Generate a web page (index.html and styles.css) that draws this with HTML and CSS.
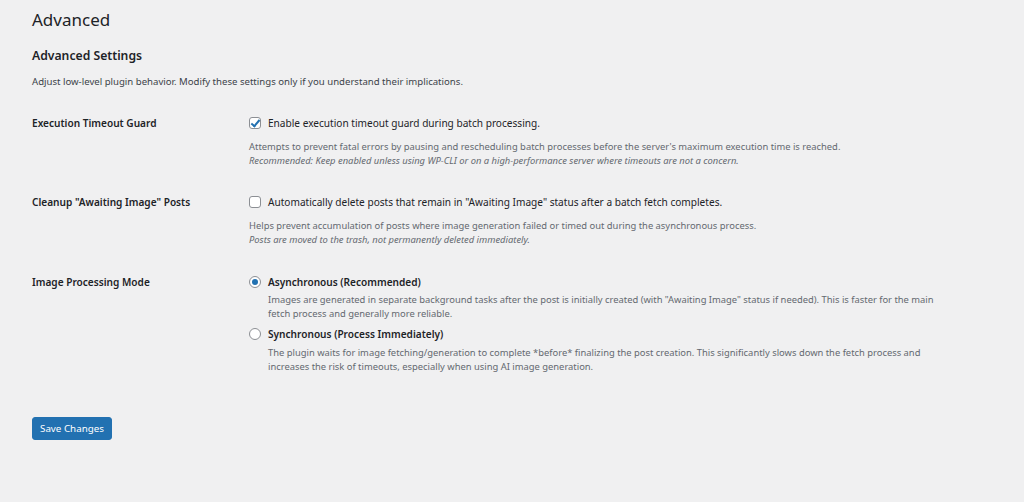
FILE: index.html
```html
<!DOCTYPE html>
<html lang="en">
<head>
  <meta charset="UTF-8">
  <title>Advanced</title>
  <link rel="stylesheet" href="styles.css">
</head>
<body>

  <div class="wrap">
    <h1>Advanced</h1>

    <h2>Advanced Settings</h2>
    <p class="intro">Adjust low-level plugin behavior. Modify these settings only if you understand their implications.</p>

    <form id="advancedForm">
      <!-- Execution timeout guard -->
      <div class="row">
        <div class="row-label">Execution Timeout Guard</div>
        <div class="row-field">
          <label class="check">
            <input type="checkbox" checked>
            <span>Enable execution timeout guard during batch processing.</span>
          </label>
          <p class="description">
            Attempts to prevent fatal errors by pausing and rescheduling batch processes before the server's maximum execution time is reached.<br>
            <em>Recommended: Keep enabled unless using WP-CLI or on a high-performance server where timeouts are not a concern.</em>
          </p>
        </div>
      </div>

      <!-- Cleanup of stuck posts -->
      <div class="row">
        <div class="row-label">Cleanup "Awaiting Image" Posts</div>
        <div class="row-field">
          <label class="check">
            <input type="checkbox">
            <span>Automatically delete posts that remain in "Awaiting Image" status after a batch fetch completes.</span>
          </label>
          <p class="description">
            Helps prevent accumulation of posts where image generation failed or timed out during the asynchronous process.<br>
            <em>Posts are moved to the trash, not permanently deleted immediately.</em>
          </p>
        </div>
      </div>

      <!-- Image processing mode -->
      <div class="row">
        <div class="row-label">Image Processing Mode</div>
        <div class="row-field">
          <label class="check">
            <input type="radio" name="mode" value="async" checked>
            <strong>Asynchronous (Recommended)</strong>
          </label>
          <p class="option-text">Images are generated in separate background tasks after the post is initially created (with "Awaiting Image" status if needed). This is faster for the main fetch process and generally more reliable.</p>

          <label class="check">
            <input type="radio" name="mode" value="sync">
            <strong>Synchronous (Process Immediately)</strong>
          </label>
          <p class="option-text">The plugin waits for image fetching/generation to complete *before* finalizing the post creation. This significantly slows down the fetch process and increases the risk of timeouts, especially when using AI image generation.</p>
        </div>
      </div>

      <p class="submit">
        <button type="button" class="button-primary">Save Changes</button>
      </p>
    </form>
  </div>

</body>
</html>
```

FILE: styles.css
```css
html, body {
  margin: 0;
  background-color: #f0f0f1;
}

body {
  font-family: "Noto Sans", "Open Sans", sans-serif;
  font-size: 10.1px;
  color: #1d2327;
}

.wrap {
  padding: 8px 32px 0 32px;
}

h1 {
  font-size: 17px;
  font-weight: 400;
  line-height: 24px;
  margin: 0;
}

h2 {
  font-size: 12.2px;
  font-weight: 600;
  line-height: 18px;
  margin: 15px 0 0 0;
}

.intro {
  color: #3c434a;
  font-size: 9.6px;
  line-height: 14px;
  margin: 10px 0 0 0;
}

.row {
  display: flex;
  padding: 13px 0;
}

.row:first-child {
  margin-top: 13px;
}

.row:last-of-type {
  padding-top: 14px;
}

.row-label {
  width: 217px;
  flex-shrink: 0;
  font-weight: 600;
  line-height: 16px;
}

.row-field {
  flex: 1;
  padding-right: 38px;
}

.check {
  display: flex;
  align-items: center;
  gap: 7px;
  line-height: 16px;
}

.check strong {
  font-weight: 600;
}

input[type="checkbox"], input[type="radio"] {
  appearance: none;
  -webkit-appearance: none;
  width: 12px;
  height: 12px;
  margin: 0;
  flex-shrink: 0;
  background: #fff;
  border: 1px solid #8c8f94;
  border-radius: 3px;
  position: relative;
}

input[type="radio"] {
  border-radius: 50%;
}

/* blue tick for checked boxes */
input[type="checkbox"]:checked::after {
  content: "";
  position: absolute;
  left: 3px;
  top: 0px;
  width: 3px;
  height: 7px;
  border: solid #2271b1;
  border-width: 0 2px 2px 0;
  transform: rotate(40deg);
}

input[type="radio"]:checked::after {
  content: "";
  position: absolute;
  left: 2px;
  top: 2px;
  width: 6px;
  height: 6px;
  border-radius: 50%;
  background: #2271b1;
}

.description {
  color: #646970;
  font-size: 9.4px;
  line-height: 14px;
  margin: 9px 0 0 0;
}

.option-text {
  color: #646970;
  font-size: 9.4px;
  line-height: 14px;
  margin: 3px 0 5px 19px;
}

.option-text:last-child {
  margin: 4px 0 0 19px;
}

.submit {
  margin: 30px 0 0 0;
}

.button-primary {
  background-color: #2271b1;
  color: #fff;
  border: 1px solid #2271b1;
  border-radius: 3px;
  font-family: inherit;
  font-size: 9.8px;
  height: 23px;
  padding: 0 7px;
  cursor: pointer;
}
```
